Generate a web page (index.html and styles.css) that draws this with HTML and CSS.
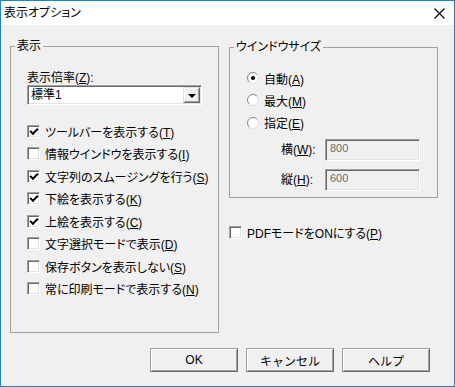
FILE: index.html
```html
<!DOCTYPE html>
<html lang="ja">
<head>
  <meta charset="UTF-8">
  <title>表示オプション</title>
  <link rel="stylesheet" href="styles.css">
</head>
<body>
  <div class="window">
    <div class="titlebar">
      <span class="title">表示オプション</span>
      <svg class="close" width="11" height="11" viewBox="0 0 11 11">
        <path d="M0.5 0.5 L10.5 10.5 M10.5 0.5 L0.5 10.5" stroke="#000" stroke-width="1.1" fill="none"/>
      </svg>
    </div>

    <div class="content">
      <div class="panels">
        <fieldset class="group group-display">
          <legend>表示</legend>
          <div class="group-body">
            <div class="field-label">表示倍率(<u>Z</u>):</div>
            <div class="combo">
              <span class="combo-value">標準1</span>
              <span class="combo-button"><span class="arrow"></span></span>
            </div>
            <ul class="checks">
              <li class="check"><span class="box checked"></span><span>ツールバーを表示する(<u>T</u>)</span></li>
              <li class="check"><span class="box"></span><span>情報ウインドウを表示する(<u>I</u>)</span></li>
              <li class="check"><span class="box checked"></span><span>文字列のスムージングを行う(<u>S</u>)</span></li>
              <li class="check"><span class="box checked"></span><span>下絵を表示する(<u>K</u>)</span></li>
              <li class="check"><span class="box checked"></span><span>上絵を表示する(<u>C</u>)</span></li>
              <li class="check"><span class="box"></span><span>文字選択モードで表示(<u>D</u>)</span></li>
              <li class="check"><span class="box"></span><span>保存ボタンを表示しない(<u>S</u>)</span></li>
              <li class="check"><span class="box"></span><span>常に印刷モードで表示する(<u>N</u>)</span></li>
            </ul>
          </div>
        </fieldset>

        <div class="side">
          <fieldset class="group group-size">
            <legend>ウインドウサイズ</legend>
            <div class="group-body">
              <div class="radio">
                <svg width="12" height="12" viewBox="0 0 12 12">
                  <circle cx="6" cy="6" r="5.5" fill="#fff" stroke="#dcdcdc"/>
                  <path d="M2.1 9.9 A5.5 5.5 0 0 1 9.9 2.1" fill="none" stroke="#8c8c8c"/>
                  <circle cx="6" cy="6" r="2" fill="#000"/>
                </svg>
                <span>自動(<u>A</u>)</span>
              </div>
              <div class="radio">
                <svg width="12" height="12" viewBox="0 0 12 12">
                  <circle cx="6" cy="6" r="5.5" fill="#fff" stroke="#dcdcdc"/>
                  <path d="M2.1 9.9 A5.5 5.5 0 0 1 9.9 2.1" fill="none" stroke="#8c8c8c"/>
                </svg>
                <span>最大(<u>M</u>)</span>
              </div>
              <div class="radio">
                <svg width="12" height="12" viewBox="0 0 12 12">
                  <circle cx="6" cy="6" r="5.5" fill="#fff" stroke="#dcdcdc"/>
                  <path d="M2.1 9.9 A5.5 5.5 0 0 1 9.9 2.1" fill="none" stroke="#8c8c8c"/>
                </svg>
                <span>指定(<u>E</u>)</span>
              </div>

              <div class="size-fields">
                <div class="size-row">
                  <span class="size-label">横(<u>W</u>):</span>
                  <span class="size-input">800</span>
                </div>
                <div class="size-row">
                  <span class="size-label">縦(<u>H</u>):</span>
                  <span class="size-input">600</span>
                </div>
              </div>
            </div>
          </fieldset>

          <div class="check pdf"><span class="box"></span><span>PDFモードをONにする(<u>P</u>)</span></div>
        </div>
      </div>

      <div class="buttons">
        <button class="btn">OK</button>
        <button class="btn">キャンセル</button>
        <button class="btn">ヘルプ</button>
      </div>
    </div>
  </div>
</body>
</html>
```

FILE: styles.css
```css
body {
  margin: 0;
  font-family: "Liberation Sans", "Noto Sans CJK JP", sans-serif;
  font-size: 12px;
  font-feature-settings: "palt";
  text-autospace: no-autospace;
  color: #000;
}

u {
  text-decoration: underline;
  text-underline-offset: 1px;
}

.window {
  width: 455px;
  height: 387px;
  box-sizing: border-box;
  border: 1px solid #1883d7;
  background-color: #f0f0f0;
  display: flex;
  flex-direction: column;
}

.titlebar {
  height: 24px;
  flex-shrink: 0;
  background-color: #fff;
  display: flex;
  align-items: center;
  justify-content: space-between;
  padding: 0 9px 0 3px;
}

.title {
  line-height: 14px;
}

.content {
  flex: 1;
  display: flex;
  flex-direction: column;
}

.panels {
  display: flex;
  align-items: flex-start;
  gap: 10px;
  padding: 15px 0 0 9px;
}

.group {
  margin: 0;
  padding: 0;
  min-width: 0;
  box-sizing: border-box;
  border: 1px solid #a0a0a0;
  width: 209px;
}

.group legend {
  padding: 0 2px;
  margin-left: 4px;
  line-height: 13px;
}

.group-display {
  height: 293px;
}

.group-display .group-body {
  padding: 19px 0 0 16px;
}

.field-label {
  line-height: 13px;
}

.combo {
  width: 175px;
  height: 20px;
  box-sizing: border-box;
  background-color: #fff;
  border: 1px solid;
  border-color: #a0a0a0 #fff #fff #a0a0a0;
  box-shadow: inset 1px 1px 0 #696969, inset -1px -1px 0 #e3e3e3;
  display: flex;
  align-items: center;
  justify-content: space-between;
  padding: 1px 1px 1px 3px;
}

.combo-value {
  line-height: 14px;
}

.combo-button {
  width: 17px;
  height: 16px;
  box-sizing: border-box;
  background-color: #f0f0f0;
  border: 1px solid;
  border-color: #e3e3e3 #696969 #696969 #e3e3e3;
  box-shadow: inset 1px 1px 0 #fff, inset -1px -1px 0 #a0a0a0;
  display: flex;
  align-items: center;
  justify-content: center;
}

.arrow {
  width: 0;
  height: 0;
  border-left: 4px solid transparent;
  border-right: 4px solid transparent;
  border-top: 4px solid #000;
  margin-top: 1px;
}

.checks {
  list-style: none;
  margin: 15px 0 0;
  padding: 0;
}

.check {
  height: 22.5px;
  display: flex;
  align-items: center;
  gap: 5px;
  white-space: nowrap;
}

.box {
  width: 13px;
  height: 13px;
  flex-shrink: 0;
  box-sizing: border-box;
  background-color: #fff;
  border: 1px solid;
  border-color: #a0a0a0 #fff #fff #a0a0a0;
  box-shadow: inset 1px 1px 0 #696969, inset -1px -1px 0 #e3e3e3;
  position: relative;
}

.box.checked::after {
  content: "";
  position: absolute;
  left: 2px;
  top: 1px;
  width: 6px;
  height: 3px;
  border-left: 2px solid #000;
  border-bottom: 2px solid #000;
  transform: rotate(-45deg);
  transform-origin: 50% 50%;
  margin: 1px 0 0 0;
}

.side {
  margin-top: 1px;
  display: flex;
  flex-direction: column;
}

.group-size {
  height: 157px;
}

.group-size .group-body {
  padding: 13px 0 0 17px;
}

.radio {
  height: 22.3px;
  display: flex;
  align-items: center;
  gap: 5px;
}

.radio svg {
  flex-shrink: 0;
}

.size-fields {
  margin-top: 5px;
  padding-left: 34px;
  display: flex;
  flex-direction: column;
  gap: 8px;
}

.size-row {
  display: flex;
  align-items: center;
}

.size-label {
  width: 44px;
  margin-top: -3px;
}

.size-input {
  width: 95px;
  height: 22px;
  box-sizing: border-box;
  border: 1px solid;
  border-color: #a0a0a0 #fff #fff #a0a0a0;
  box-shadow: inset 1px 1px 0 #696969, inset -1px -1px 0 #e3e3e3;
  background-color: #f0f0f0;
  color: #6d6d6d;
  font-size: 11px;
  line-height: 12px;
  padding: 2px 0 0 4px;
}

.pdf {
  margin-top: 23px;
  height: 22px;
}

.buttons {
  margin-top: auto;
  display: flex;
  justify-content: flex-end;
  gap: 8px;
  padding: 0 24px 14px 0;
}

.btn {
  width: 88px;
  height: 24px;
  box-sizing: border-box;
  font-family: inherit;
  font-size: 12px;
  color: #000;
  background-color: #f0f0f0;
  border: 1px solid;
  border-color: #a0a0a0 #696969 #696969 #a0a0a0;
  box-shadow: inset 1px 1px 0 #fff, inset -1px -1px 0 #a0a0a0;
  padding: 0;
}
```
